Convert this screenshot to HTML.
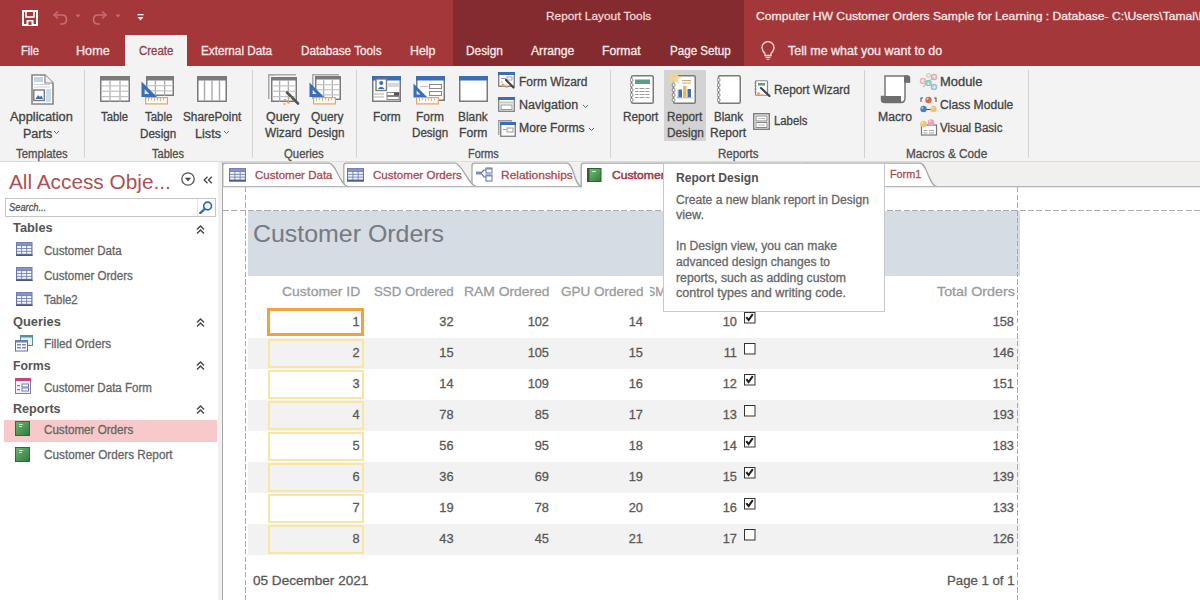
<!DOCTYPE html>
<html><head><meta charset="utf-8"><style>
html,body{margin:0;padding:0;width:1200px;height:600px;overflow:hidden;background:#fff}
body{position:relative;font-family:"Liberation Sans",sans-serif}
.t{position:absolute;white-space:nowrap;transform-origin:0 0;-webkit-text-stroke:0.3px currentColor}
.r{position:absolute}
</style></head><body>
<div class="r" style="left:0px;top:0px;width:1200px;height:66px;background:#A4373A"></div>
<div class="r" style="left:453px;top:0px;width:291px;height:66px;background:#832B2E"></div>
<div class="r" style="left:125px;top:35px;width:62px;height:31px;background:#F3F3F3"></div>
<div class="r" style="left:0px;top:66px;width:1200px;height:96px;background:#F3F3F3"></div>
<div class="r" style="left:0px;top:161px;width:1200px;height:1px;background:#DCDCDC"></div>
<div class="r" style="left:664px;top:70px;width:42px;height:71px;background:#D3D3D3"></div>
<div class="r" style="left:0px;top:162px;width:218px;height:438px;background:#FFFFFF"></div>
<div class="r" style="left:218px;top:162px;width:4px;height:438px;background:#F0F0F0"></div>
<div class="r" style="left:222px;top:162px;width:1px;height:438px;background:#A8A8A8"></div>
<div class="r" style="left:223px;top:162px;width:977px;height:25px;background:#F1F0EF"></div>
<div class="r" style="left:223px;top:186px;width:977px;height:1px;background:#B9BBBE"></div>
<div class="r" style="left:223px;top:187px;width:977px;height:413px;background:#FFFFFF"></div>
<div class="t" style="left:546.40px;top:11.37px;font-size:11.5px;line-height:11.5px;color:#F2D4D4;font-weight:normal;font-style:normal;transform:scaleX(1.0307);">Report Layout Tools</div>
<div class="t" style="left:755.60px;top:11.37px;font-size:11.5px;line-height:11.5px;color:#F8E6E6;font-weight:normal;font-style:normal;transform:scaleX(1.0569);">Computer HW Customer Orders Sample for Learning : Database- C:\Users\Tamal\Documents\Access</div>
<div class="t" style="left:21.30px;top:44.84px;font-size:12px;line-height:12px;color:#FBE9E9;font-weight:normal;font-style:normal;transform:scaleX(0.9310);">File</div>
<div class="t" style="left:76.30px;top:44.84px;font-size:12px;line-height:12px;color:#FBE9E9;font-weight:normal;font-style:normal;transform:scaleX(1.0529);">Home</div>
<div class="t" style="left:201.30px;top:44.84px;font-size:12px;line-height:12px;color:#FBE9E9;font-weight:normal;font-style:normal;transform:scaleX(0.9766);">External Data</div>
<div class="t" style="left:300.50px;top:44.84px;font-size:12px;line-height:12px;color:#FBE9E9;font-weight:normal;font-style:normal;transform:scaleX(0.9758);">Database Tools</div>
<div class="t" style="left:409.50px;top:44.84px;font-size:12px;line-height:12px;color:#FBE9E9;font-weight:normal;font-style:normal;transform:scaleX(1.0292);">Help</div>
<div class="t" style="left:465.50px;top:44.84px;font-size:12px;line-height:12px;color:#FBE9E9;font-weight:normal;font-style:normal;transform:scaleX(0.9879);">Design</div>
<div class="t" style="left:530.70px;top:44.84px;font-size:12px;line-height:12px;color:#FBE9E9;font-weight:normal;font-style:normal;transform:scaleX(1.0143);">Arrange</div>
<div class="t" style="left:602.30px;top:44.84px;font-size:12px;line-height:12px;color:#FBE9E9;font-weight:normal;font-style:normal;transform:scaleX(1.0158);">Format</div>
<div class="t" style="left:669.60px;top:44.84px;font-size:12px;line-height:12px;color:#FBE9E9;font-weight:normal;font-style:normal;transform:scaleX(0.9679);">Page Setup</div>
<div class="t" style="left:788.30px;top:44.84px;font-size:12px;line-height:12px;color:#FBE9E9;font-weight:normal;font-style:normal;transform:scaleX(1.0414);">Tell me what you want to do</div>
<div class="t" style="left:138.50px;top:44.84px;font-size:12px;line-height:12px;color:#93404A;font-weight:normal;font-style:normal;transform:scaleX(0.9524);">Create</div>
<div class="t" style="left:10.40px;top:110.84px;font-size:12px;line-height:12px;color:#444444;font-weight:normal;font-style:normal;transform:scaleX(1.0698);">Application</div>
<div class="t" style="left:22.70px;top:127.84px;font-size:12px;line-height:12px;color:#444444;font-weight:normal;font-style:normal;transform:scaleX(1.0462);">Parts</div>
<div class="t" style="left:101.40px;top:110.84px;font-size:12px;line-height:12px;color:#444444;font-weight:normal;font-style:normal;transform:scaleX(0.9378);">Table</div>
<div class="t" style="left:144.70px;top:110.84px;font-size:12px;line-height:12px;color:#444444;font-weight:normal;font-style:normal;transform:scaleX(0.9517);">Table</div>
<div class="t" style="left:140.40px;top:127.84px;font-size:12px;line-height:12px;color:#444444;font-weight:normal;font-style:normal;transform:scaleX(0.9692);">Design</div>
<div class="t" style="left:182.70px;top:110.84px;font-size:12px;line-height:12px;color:#444444;font-weight:normal;font-style:normal;transform:scaleX(0.9820);">SharePoint</div>
<div class="t" style="left:195.00px;top:127.84px;font-size:12px;line-height:12px;color:#444444;font-weight:normal;font-style:normal;transform:scaleX(1.0538);">Lists</div>
<div class="t" style="left:266.00px;top:111.34px;font-size:12px;line-height:12px;color:#444444;font-weight:normal;font-style:normal;transform:scaleX(1.0344);">Query</div>
<div class="t" style="left:264.70px;top:127.34px;font-size:12px;line-height:12px;color:#444444;font-weight:normal;font-style:normal;transform:scaleX(0.9857);">Wizard</div>
<div class="t" style="left:310.50px;top:111.34px;font-size:12px;line-height:12px;color:#444444;font-weight:normal;font-style:normal;transform:scaleX(0.9946);">Query</div>
<div class="t" style="left:308.30px;top:127.34px;font-size:12px;line-height:12px;color:#444444;font-weight:normal;font-style:normal;transform:scaleX(0.9745);">Design</div>
<div class="t" style="left:372.60px;top:110.84px;font-size:12px;line-height:12px;color:#444444;font-weight:normal;font-style:normal;transform:scaleX(0.9895);">Form</div>
<div class="t" style="left:416.00px;top:110.84px;font-size:12px;line-height:12px;color:#444444;font-weight:normal;font-style:normal;transform:scaleX(0.9967);">Form</div>
<div class="t" style="left:411.90px;top:127.34px;font-size:12px;line-height:12px;color:#444444;font-weight:normal;font-style:normal;transform:scaleX(0.9665);">Design</div>
<div class="t" style="left:458.30px;top:110.84px;font-size:12px;line-height:12px;color:#444444;font-weight:normal;font-style:normal;transform:scaleX(0.9894);">Blank</div>
<div class="t" style="left:459.30px;top:127.34px;font-size:12px;line-height:12px;color:#444444;font-weight:normal;font-style:normal;transform:scaleX(1.0109);">Form</div>
<div class="t" style="left:518.80px;top:75.84px;font-size:12px;line-height:12px;color:#444444;font-weight:normal;font-style:normal;transform:scaleX(0.9976);">Form Wizard</div>
<div class="t" style="left:518.80px;top:99.04px;font-size:12px;line-height:12px;color:#444444;font-weight:normal;font-style:normal;transform:scaleX(1.0441);">Navigation</div>
<div class="t" style="left:518.80px;top:122.24px;font-size:12px;line-height:12px;color:#444444;font-weight:normal;font-style:normal;transform:scaleX(1.0145);">More Forms</div>
<div class="t" style="left:623.40px;top:110.84px;font-size:12px;line-height:12px;color:#444444;font-weight:normal;font-style:normal;transform:scaleX(0.9829);">Report</div>
<div class="t" style="left:666.80px;top:110.84px;font-size:12px;line-height:12px;color:#444444;font-weight:normal;font-style:normal;transform:scaleX(0.9774);">Report</div>
<div class="t" style="left:666.80px;top:127.34px;font-size:12px;line-height:12px;color:#444444;font-weight:normal;font-style:normal;transform:scaleX(0.9852);">Design</div>
<div class="t" style="left:713.60px;top:110.84px;font-size:12px;line-height:12px;color:#444444;font-weight:normal;font-style:normal;transform:scaleX(0.9661);">Blank</div>
<div class="t" style="left:710.00px;top:127.34px;font-size:12px;line-height:12px;color:#444444;font-weight:normal;font-style:normal;transform:scaleX(0.9996);">Report</div>
<div class="t" style="left:773.60px;top:84.04px;font-size:12px;line-height:12px;color:#444444;font-weight:normal;font-style:normal;transform:scaleX(0.9885);">Report Wizard</div>
<div class="t" style="left:773.60px;top:115.44px;font-size:12px;line-height:12px;color:#444444;font-weight:normal;font-style:normal;transform:scaleX(0.9446);">Labels</div>
<div class="t" style="left:878.00px;top:110.84px;font-size:12px;line-height:12px;color:#444444;font-weight:normal;font-style:normal;transform:scaleX(1.0199);">Macro</div>
<div class="t" style="left:940.00px;top:75.84px;font-size:12px;line-height:12px;color:#444444;font-weight:normal;font-style:normal;transform:scaleX(1.0774);">Module</div>
<div class="t" style="left:940.00px;top:99.04px;font-size:12px;line-height:12px;color:#444444;font-weight:normal;font-style:normal;transform:scaleX(1.0083);">Class Module</div>
<div class="t" style="left:940.00px;top:122.24px;font-size:12px;line-height:12px;color:#444444;font-weight:normal;font-style:normal;transform:scaleX(0.9579);">Visual Basic</div>
<div class="t" style="left:16.00px;top:147.84px;font-size:12px;line-height:12px;color:#505050;font-weight:normal;font-style:normal;transform:scaleX(0.9435);">Templates</div>
<div class="t" style="left:151.70px;top:147.84px;font-size:12px;line-height:12px;color:#505050;font-weight:normal;font-style:normal;transform:scaleX(0.9226);">Tables</div>
<div class="t" style="left:284.40px;top:147.84px;font-size:12px;line-height:12px;color:#505050;font-weight:normal;font-style:normal;transform:scaleX(0.9473);">Queries</div>
<div class="t" style="left:468.00px;top:147.84px;font-size:12px;line-height:12px;color:#505050;font-weight:normal;font-style:normal;transform:scaleX(0.9060);">Forms</div>
<div class="t" style="left:718.00px;top:147.84px;font-size:12px;line-height:12px;color:#505050;font-weight:normal;font-style:normal;transform:scaleX(0.9616);">Reports</div>
<div class="t" style="left:906.00px;top:147.84px;font-size:12px;line-height:12px;color:#505050;font-weight:normal;font-style:normal;transform:scaleX(0.9819);">Macros &amp; Code</div>
<div class="r" style="left:84px;top:70px;width:1px;height:88px;background:#D2D2D2"></div>
<div class="r" style="left:252px;top:70px;width:1px;height:88px;background:#D2D2D2"></div>
<div class="r" style="left:356px;top:70px;width:1px;height:88px;background:#D2D2D2"></div>
<div class="r" style="left:610px;top:70px;width:1px;height:88px;background:#D2D2D2"></div>
<div class="r" style="left:864px;top:70px;width:1px;height:88px;background:#D2D2D2"></div>
<div class="r" style="left:1028px;top:70px;width:1px;height:88px;background:#D2D2D2"></div>
<div class="t" style="left:9.00px;top:170.82px;font-size:21px;line-height:21px;color:#AD5057;font-weight:normal;font-style:normal;transform:scaleX(0.9902);-webkit-text-stroke:0">All Access Obje...</div>
<div class="r" style="left:5px;top:198px;width:211px;height:19px;background:#fff;border:1px solid #C6C6C6;box-sizing:border-box"></div>
<div class="r" style="left:197px;top:199px;width:1px;height:17px;background:#E2E2E2"></div>
<div class="t" style="left:8.70px;top:201.69px;font-size:11px;line-height:11px;color:#555;font-weight:normal;font-style:italic;transform:scaleX(0.8474);">Search...</div>
<div class="t" style="left:13.40px;top:222.22px;font-size:12.5px;line-height:12.5px;color:#555555;font-weight:bold;font-style:normal;transform:scaleX(1.0267);-webkit-text-stroke:0;">Tables</div>
<div class="t" style="left:13.40px;top:316.02px;font-size:12.5px;line-height:12.5px;color:#555555;font-weight:bold;font-style:normal;transform:scaleX(1.0290);-webkit-text-stroke:0;">Queries</div>
<div class="t" style="left:13.40px;top:359.82px;font-size:12.5px;line-height:12.5px;color:#555555;font-weight:bold;font-style:normal;transform:scaleX(0.9843);-webkit-text-stroke:0;">Forms</div>
<div class="t" style="left:13.40px;top:403.12px;font-size:12.5px;line-height:12.5px;color:#555555;font-weight:bold;font-style:normal;transform:scaleX(1.0079);-webkit-text-stroke:0;">Reports</div>
<div class="r" style="left:4px;top:420px;width:213px;height:22px;background:#F8C9CA"></div>
<div class="t" style="left:44.40px;top:244.84px;font-size:12px;line-height:12px;color:#666666;font-weight:normal;font-style:normal;transform:scaleX(0.9617);">Customer Data</div>
<div class="t" style="left:44.40px;top:269.84px;font-size:12px;line-height:12px;color:#666666;font-weight:normal;font-style:normal;transform:scaleX(0.9661);">Customer Orders</div>
<div class="t" style="left:44.40px;top:294.34px;font-size:12px;line-height:12px;color:#666666;font-weight:normal;font-style:normal;transform:scaleX(0.9503);">Table2</div>
<div class="t" style="left:44.40px;top:338.34px;font-size:12px;line-height:12px;color:#666666;font-weight:normal;font-style:normal;transform:scaleX(0.9785);">Filled Orders</div>
<div class="t" style="left:44.40px;top:381.84px;font-size:12px;line-height:12px;color:#666666;font-weight:normal;font-style:normal;transform:scaleX(0.9641);">Customer Data Form</div>
<div class="t" style="left:44.40px;top:424.44px;font-size:12px;line-height:12px;color:#666666;font-weight:normal;font-style:normal;transform:scaleX(0.9694);">Customer Orders</div>
<div class="t" style="left:44.40px;top:449.44px;font-size:12px;line-height:12px;color:#666666;font-weight:normal;font-style:normal;transform:scaleX(0.9790);">Customer Orders Report</div>
<div class="r" style="left:247.5px;top:211px;width:772.5px;height:65px;background:#D6DCE4"></div>
<div class="t" style="left:252.60px;top:221.98px;font-size:24px;line-height:24px;color:#777A82;font-weight:normal;font-style:normal;transform:scaleX(1.0379);-webkit-text-stroke:0.05px">Customer Orders</div>
<div class="t" style="left:281.80px;top:284.54px;font-size:13.3px;line-height:13.3px;color:#9B9B9B;font-weight:normal;font-style:normal;transform:scaleX(1.0477);">Customer ID</div>
<div class="t" style="left:374.30px;top:284.54px;font-size:13.3px;line-height:13.3px;color:#9B9B9B;font-weight:normal;font-style:normal;transform:scaleX(0.9984);">SSD Ordered</div>
<div class="t" style="left:464.00px;top:284.54px;font-size:13.3px;line-height:13.3px;color:#9B9B9B;font-weight:normal;font-style:normal;transform:scaleX(1.0434);">RAM Ordered</div>
<div class="t" style="left:561.00px;top:284.54px;font-size:13.3px;line-height:13.3px;color:#9B9B9B;font-weight:normal;font-style:normal;transform:scaleX(1.0160);">GPU Ordered</div>
<div class="t" style="left:937.10px;top:284.54px;font-size:13.3px;line-height:13.3px;color:#9B9B9B;font-weight:normal;font-style:normal;transform:scaleX(1.0755);">Total Orders</div>
<div class="r" style="left:267px;top:308px;width:97px;height:28px;border:3px solid #F2A13C;box-sizing:border-box"></div>
<div class="t" style="left:352.38px;top:315.56px;font-size:12.8px;line-height:12.8px;color:#595959;font-weight:normal;font-style:normal;transform:scaleX(1.0000);">1</div>
<div class="t" style="left:439.36px;top:315.56px;font-size:12.8px;line-height:12.8px;color:#595959;font-weight:normal;font-style:normal;transform:scaleX(1.0000);">32</div>
<div class="t" style="left:527.65px;top:315.56px;font-size:12.8px;line-height:12.8px;color:#595959;font-weight:normal;font-style:normal;transform:scaleX(1.0000);">102</div>
<div class="t" style="left:628.76px;top:315.56px;font-size:12.8px;line-height:12.8px;color:#595959;font-weight:normal;font-style:normal;transform:scaleX(1.0000);">14</div>
<div class="t" style="left:722.76px;top:315.56px;font-size:12.8px;line-height:12.8px;color:#595959;font-weight:normal;font-style:normal;transform:scaleX(1.0000);">10</div>
<div class="t" style="left:992.65px;top:315.56px;font-size:12.8px;line-height:12.8px;color:#595959;font-weight:normal;font-style:normal;transform:scaleX(1.0000);">158</div>
<svg class="r" style="left:743.5px;top:311.5px" width="12" height="12" viewBox="0 0 12 12"><rect x="0.5" y="0.5" width="10.5" height="10.5" fill="#fff" stroke="#333" stroke-width="1"/><path d="M2.3 5.2 L4.6 8 L8.8 2.2" fill="none" stroke="#1E1E1E" stroke-width="2"/></svg>
<div class="r" style="left:248px;top:338px;width:772px;height:31px;background:#F2F2F2"></div>
<div class="r" style="left:267.5px;top:339px;width:96px;height:28.5px;border:2.5px solid #F9E5A4;box-sizing:border-box"></div>
<div class="t" style="left:352.38px;top:346.56px;font-size:12.8px;line-height:12.8px;color:#595959;font-weight:normal;font-style:normal;transform:scaleX(1.0000);">2</div>
<div class="t" style="left:439.36px;top:346.56px;font-size:12.8px;line-height:12.8px;color:#595959;font-weight:normal;font-style:normal;transform:scaleX(1.0000);">15</div>
<div class="t" style="left:527.65px;top:346.56px;font-size:12.8px;line-height:12.8px;color:#595959;font-weight:normal;font-style:normal;transform:scaleX(1.0000);">105</div>
<div class="t" style="left:628.76px;top:346.56px;font-size:12.8px;line-height:12.8px;color:#595959;font-weight:normal;font-style:normal;transform:scaleX(1.0000);">15</div>
<div class="t" style="left:723.71px;top:346.56px;font-size:12.8px;line-height:12.8px;color:#595959;font-weight:normal;font-style:normal;transform:scaleX(1.0000);">11</div>
<div class="t" style="left:992.65px;top:346.56px;font-size:12.8px;line-height:12.8px;color:#595959;font-weight:normal;font-style:normal;transform:scaleX(1.0000);">146</div>
<svg class="r" style="left:743.5px;top:342.5px" width="12" height="12" viewBox="0 0 12 12"><rect x="0.5" y="0.5" width="10.5" height="10.5" fill="#fff" stroke="#333" stroke-width="1"/></svg>
<div class="r" style="left:267.5px;top:370px;width:96px;height:28.5px;border:2.5px solid #F9E5A4;box-sizing:border-box"></div>
<div class="t" style="left:352.38px;top:377.56px;font-size:12.8px;line-height:12.8px;color:#595959;font-weight:normal;font-style:normal;transform:scaleX(1.0000);">3</div>
<div class="t" style="left:439.36px;top:377.56px;font-size:12.8px;line-height:12.8px;color:#595959;font-weight:normal;font-style:normal;transform:scaleX(1.0000);">14</div>
<div class="t" style="left:527.65px;top:377.56px;font-size:12.8px;line-height:12.8px;color:#595959;font-weight:normal;font-style:normal;transform:scaleX(1.0000);">109</div>
<div class="t" style="left:628.76px;top:377.56px;font-size:12.8px;line-height:12.8px;color:#595959;font-weight:normal;font-style:normal;transform:scaleX(1.0000);">16</div>
<div class="t" style="left:722.76px;top:377.56px;font-size:12.8px;line-height:12.8px;color:#595959;font-weight:normal;font-style:normal;transform:scaleX(1.0000);">12</div>
<div class="t" style="left:992.65px;top:377.56px;font-size:12.8px;line-height:12.8px;color:#595959;font-weight:normal;font-style:normal;transform:scaleX(1.0000);">151</div>
<svg class="r" style="left:743.5px;top:373.5px" width="12" height="12" viewBox="0 0 12 12"><rect x="0.5" y="0.5" width="10.5" height="10.5" fill="#fff" stroke="#333" stroke-width="1"/><path d="M2.3 5.2 L4.6 8 L8.8 2.2" fill="none" stroke="#1E1E1E" stroke-width="2"/></svg>
<div class="r" style="left:248px;top:400px;width:772px;height:31px;background:#F2F2F2"></div>
<div class="r" style="left:267.5px;top:401px;width:96px;height:28.5px;border:2.5px solid #F9E5A4;box-sizing:border-box"></div>
<div class="t" style="left:352.38px;top:408.56px;font-size:12.8px;line-height:12.8px;color:#595959;font-weight:normal;font-style:normal;transform:scaleX(1.0000);">4</div>
<div class="t" style="left:439.36px;top:408.56px;font-size:12.8px;line-height:12.8px;color:#595959;font-weight:normal;font-style:normal;transform:scaleX(1.0000);">78</div>
<div class="t" style="left:534.76px;top:408.56px;font-size:12.8px;line-height:12.8px;color:#595959;font-weight:normal;font-style:normal;transform:scaleX(1.0000);">85</div>
<div class="t" style="left:628.76px;top:408.56px;font-size:12.8px;line-height:12.8px;color:#595959;font-weight:normal;font-style:normal;transform:scaleX(1.0000);">17</div>
<div class="t" style="left:722.76px;top:408.56px;font-size:12.8px;line-height:12.8px;color:#595959;font-weight:normal;font-style:normal;transform:scaleX(1.0000);">13</div>
<div class="t" style="left:992.65px;top:408.56px;font-size:12.8px;line-height:12.8px;color:#595959;font-weight:normal;font-style:normal;transform:scaleX(1.0000);">193</div>
<svg class="r" style="left:743.5px;top:404.5px" width="12" height="12" viewBox="0 0 12 12"><rect x="0.5" y="0.5" width="10.5" height="10.5" fill="#fff" stroke="#333" stroke-width="1"/></svg>
<div class="r" style="left:267.5px;top:432px;width:96px;height:28.5px;border:2.5px solid #F9E5A4;box-sizing:border-box"></div>
<div class="t" style="left:352.38px;top:439.56px;font-size:12.8px;line-height:12.8px;color:#595959;font-weight:normal;font-style:normal;transform:scaleX(1.0000);">5</div>
<div class="t" style="left:439.36px;top:439.56px;font-size:12.8px;line-height:12.8px;color:#595959;font-weight:normal;font-style:normal;transform:scaleX(1.0000);">56</div>
<div class="t" style="left:534.76px;top:439.56px;font-size:12.8px;line-height:12.8px;color:#595959;font-weight:normal;font-style:normal;transform:scaleX(1.0000);">95</div>
<div class="t" style="left:628.76px;top:439.56px;font-size:12.8px;line-height:12.8px;color:#595959;font-weight:normal;font-style:normal;transform:scaleX(1.0000);">18</div>
<div class="t" style="left:722.76px;top:439.56px;font-size:12.8px;line-height:12.8px;color:#595959;font-weight:normal;font-style:normal;transform:scaleX(1.0000);">14</div>
<div class="t" style="left:992.65px;top:439.56px;font-size:12.8px;line-height:12.8px;color:#595959;font-weight:normal;font-style:normal;transform:scaleX(1.0000);">183</div>
<svg class="r" style="left:743.5px;top:435.5px" width="12" height="12" viewBox="0 0 12 12"><rect x="0.5" y="0.5" width="10.5" height="10.5" fill="#fff" stroke="#333" stroke-width="1"/><path d="M2.3 5.2 L4.6 8 L8.8 2.2" fill="none" stroke="#1E1E1E" stroke-width="2"/></svg>
<div class="r" style="left:248px;top:462px;width:772px;height:31px;background:#F2F2F2"></div>
<div class="r" style="left:267.5px;top:463px;width:96px;height:28.5px;border:2.5px solid #F9E5A4;box-sizing:border-box"></div>
<div class="t" style="left:352.38px;top:470.56px;font-size:12.8px;line-height:12.8px;color:#595959;font-weight:normal;font-style:normal;transform:scaleX(1.0000);">6</div>
<div class="t" style="left:439.36px;top:470.56px;font-size:12.8px;line-height:12.8px;color:#595959;font-weight:normal;font-style:normal;transform:scaleX(1.0000);">36</div>
<div class="t" style="left:534.76px;top:470.56px;font-size:12.8px;line-height:12.8px;color:#595959;font-weight:normal;font-style:normal;transform:scaleX(1.0000);">69</div>
<div class="t" style="left:628.76px;top:470.56px;font-size:12.8px;line-height:12.8px;color:#595959;font-weight:normal;font-style:normal;transform:scaleX(1.0000);">19</div>
<div class="t" style="left:722.76px;top:470.56px;font-size:12.8px;line-height:12.8px;color:#595959;font-weight:normal;font-style:normal;transform:scaleX(1.0000);">15</div>
<div class="t" style="left:992.65px;top:470.56px;font-size:12.8px;line-height:12.8px;color:#595959;font-weight:normal;font-style:normal;transform:scaleX(1.0000);">139</div>
<svg class="r" style="left:743.5px;top:466.5px" width="12" height="12" viewBox="0 0 12 12"><rect x="0.5" y="0.5" width="10.5" height="10.5" fill="#fff" stroke="#333" stroke-width="1"/><path d="M2.3 5.2 L4.6 8 L8.8 2.2" fill="none" stroke="#1E1E1E" stroke-width="2"/></svg>
<div class="r" style="left:267.5px;top:494px;width:96px;height:28.5px;border:2.5px solid #F9E5A4;box-sizing:border-box"></div>
<div class="t" style="left:352.38px;top:501.56px;font-size:12.8px;line-height:12.8px;color:#595959;font-weight:normal;font-style:normal;transform:scaleX(1.0000);">7</div>
<div class="t" style="left:439.36px;top:501.56px;font-size:12.8px;line-height:12.8px;color:#595959;font-weight:normal;font-style:normal;transform:scaleX(1.0000);">19</div>
<div class="t" style="left:534.76px;top:501.56px;font-size:12.8px;line-height:12.8px;color:#595959;font-weight:normal;font-style:normal;transform:scaleX(1.0000);">78</div>
<div class="t" style="left:628.76px;top:501.56px;font-size:12.8px;line-height:12.8px;color:#595959;font-weight:normal;font-style:normal;transform:scaleX(1.0000);">20</div>
<div class="t" style="left:722.76px;top:501.56px;font-size:12.8px;line-height:12.8px;color:#595959;font-weight:normal;font-style:normal;transform:scaleX(1.0000);">16</div>
<div class="t" style="left:992.65px;top:501.56px;font-size:12.8px;line-height:12.8px;color:#595959;font-weight:normal;font-style:normal;transform:scaleX(1.0000);">133</div>
<svg class="r" style="left:743.5px;top:497.5px" width="12" height="12" viewBox="0 0 12 12"><rect x="0.5" y="0.5" width="10.5" height="10.5" fill="#fff" stroke="#333" stroke-width="1"/><path d="M2.3 5.2 L4.6 8 L8.8 2.2" fill="none" stroke="#1E1E1E" stroke-width="2"/></svg>
<div class="r" style="left:248px;top:524px;width:772px;height:31px;background:#F2F2F2"></div>
<div class="r" style="left:267.5px;top:525px;width:96px;height:28.5px;border:2.5px solid #F9E5A4;box-sizing:border-box"></div>
<div class="t" style="left:352.38px;top:532.56px;font-size:12.8px;line-height:12.8px;color:#595959;font-weight:normal;font-style:normal;transform:scaleX(1.0000);">8</div>
<div class="t" style="left:439.36px;top:532.56px;font-size:12.8px;line-height:12.8px;color:#595959;font-weight:normal;font-style:normal;transform:scaleX(1.0000);">43</div>
<div class="t" style="left:534.76px;top:532.56px;font-size:12.8px;line-height:12.8px;color:#595959;font-weight:normal;font-style:normal;transform:scaleX(1.0000);">45</div>
<div class="t" style="left:628.76px;top:532.56px;font-size:12.8px;line-height:12.8px;color:#595959;font-weight:normal;font-style:normal;transform:scaleX(1.0000);">21</div>
<div class="t" style="left:722.76px;top:532.56px;font-size:12.8px;line-height:12.8px;color:#595959;font-weight:normal;font-style:normal;transform:scaleX(1.0000);">17</div>
<div class="t" style="left:992.65px;top:532.56px;font-size:12.8px;line-height:12.8px;color:#595959;font-weight:normal;font-style:normal;transform:scaleX(1.0000);">126</div>
<svg class="r" style="left:743.5px;top:528.5px" width="12" height="12" viewBox="0 0 12 12"><rect x="0.5" y="0.5" width="10.5" height="10.5" fill="#fff" stroke="#333" stroke-width="1"/></svg>
<div class="t" style="left:252.70px;top:575.46px;font-size:12.8px;line-height:12.8px;color:#595959;font-weight:normal;font-style:normal;transform:scaleX(1.0592);">05 December 2021</div>
<div class="t" style="left:946.50px;top:575.36px;font-size:12.8px;line-height:12.8px;color:#595959;font-weight:normal;font-style:normal;transform:scaleX(1.0310);">Page 1 of 1</div>
<div class="r" style="left:650px;top:280px;width:13px;height:20px;overflow:hidden"><div class="t" style="left:-3px;top:4.54px;font-size:13.3px;line-height:13.3px;color:#9B9B9B;transform:scaleX(0.93)">SM</div></div>
<div class="r" style="left:223px;top:210px;width:977px;height:1px;background:repeating-linear-gradient(90deg,#ABABAB 0 6px,transparent 6px 8.3px)"></div>
<div class="r" style="left:245px;top:187px;width:1px;height:413px;background:repeating-linear-gradient(180deg,#ABABAB 0 5.5px,transparent 5.5px 7.7px)"></div>
<div class="r" style="left:1017px;top:187px;width:1px;height:413px;background:repeating-linear-gradient(180deg,#ABABAB 0 5.5px,transparent 5.5px 7.7px)"></div>
<svg class="r" style="left:31px;top:74px" width="23" height="31" viewBox="0 0 23 31"><path d="M1 1 H14 L22 9 V30 H1 Z" fill="#fff" stroke="#858585" stroke-width="1.6"/><path d="M14 1 V9 H22" fill="#F4F4F4" stroke="#858585" stroke-width="1.2"/><rect x="3" y="3" width="9" height="5" fill="#BFD3EA"/><rect x="3" y="10" width="16" height="1" fill="#D0D0D0"/><rect x="3" y="12.5" width="16" height="1" fill="#D0D0D0"/><rect x="15" y="15" width="5" height="13" fill="#C9DBEE"/><rect x="2.8" y="16" width="10.5" height="10.5" fill="#fff" stroke="#7A7A7A" stroke-width="1.4"/><path d="M4.5 25 L7 21 L9 23 L10.5 21.5 L12 25 Z" fill="#3C6EB4"/></svg>
<svg class="r" style="left:100px;top:76px" width="30" height="26" viewBox="0 0 30 26"><rect x="0.75" y="0.75" width="28.5" height="24.5" fill="#fff" stroke="#7A7A7A" stroke-width="1.5"/><rect x="0" y="0" width="30" height="4.5" fill="#7A7A7A"/><rect x="9.40" y="4.5" width="1.2" height="21.5" fill="#A9A9A9"/><rect x="19.40" y="4.5" width="1.2" height="21.5" fill="#A9A9A9"/><rect x="1" y="9.28" width="28" height="1.2" fill="#C4C4C4"/><rect x="1" y="14.65" width="28" height="1.2" fill="#C4C4C4"/><rect x="1" y="20.02" width="28" height="1.2" fill="#C4C4C4"/></svg>
<svg class="r" style="left:146px;top:76px" width="28" height="20" viewBox="0 0 28 20"><rect x="0.75" y="0.75" width="26.5" height="18.5" fill="#fff" stroke="#7A7A7A" stroke-width="1.5"/><rect x="0" y="0" width="28" height="4.5" fill="#7A7A7A"/><rect x="8.73" y="4.5" width="1.2" height="15.5" fill="#A9A9A9"/><rect x="18.07" y="4.5" width="1.2" height="15.5" fill="#A9A9A9"/><rect x="1" y="9.07" width="26" height="1.2" fill="#C4C4C4"/><rect x="1" y="14.23" width="26" height="1.2" fill="#C4C4C4"/></svg>
<svg class="r" style="left:141px;top:81px" width="17" height="17" viewBox="0 0 17 17"><path d="M0.5 0.5 V16 H16 Z" fill="#3A6FB7"/><path d="M3.6 8.2 V12.9 H8.3 Z" fill="#DDEBF7"/></svg>
<svg class="r" style="left:145px;top:97px" width="23" height="8" viewBox="0 0 23 8"><rect x="0.6" y="0.6" width="21.8" height="6.3" fill="#FFFDF8" stroke="#E9A265" stroke-width="1.2"/><rect x="3" y="1.2" width="0.9" height="3" fill="#E9A265"/><rect x="6" y="1.2" width="0.9" height="2" fill="#E9A265"/><rect x="9" y="1.2" width="0.9" height="3" fill="#E9A265"/><rect x="12" y="1.2" width="0.9" height="2" fill="#E9A265"/><rect x="15" y="1.2" width="0.9" height="3" fill="#E9A265"/><rect x="18" y="1.2" width="0.9" height="2" fill="#E9A265"/></svg>
<svg class="r" style="left:197px;top:76px" width="30" height="26" viewBox="0 0 30 26"><rect x="0.75" y="0.75" width="28.5" height="24.5" fill="#fff" stroke="#7A7A7A" stroke-width="1.5"/><rect x="0" y="0" width="30" height="4.5" fill="#7A7A7A"/><rect x="6.8" y="4" width="1.4" height="21" fill="#A9A9A9"/><rect x="14.3" y="4" width="1.4" height="21" fill="#A9A9A9"/><rect x="21.8" y="4" width="1.4" height="21" fill="#A9A9A9"/></svg>
<svg class="r" style="left:268px;top:74px" width="7" height="26" viewBox="0 0 7 26"><path d="M0.75 25 V0.75 H28" fill="none" stroke="#A9A9A9" stroke-width="1.5"/></svg>
<svg class="r" style="left:268px;top:74px" width="30" height="4" viewBox="0 0 30 4"><path d="M0.75 0.75 H28" fill="none" stroke="#A9A9A9" stroke-width="1.5"/></svg>
<svg class="r" style="left:271px;top:77px" width="26" height="25" viewBox="0 0 26 25"><rect x="0.75" y="0.75" width="24.5" height="23.5" fill="#fff" stroke="#7A7A7A" stroke-width="1.5"/><rect x="0" y="0" width="26" height="3.5" fill="#7A7A7A"/><rect x="8.07" y="3.5" width="1.2" height="21.5" fill="#A9A9A9"/><rect x="16.73" y="3.5" width="1.2" height="21.5" fill="#A9A9A9"/><rect x="1" y="8.28" width="24" height="1.2" fill="#C4C4C4"/><rect x="1" y="13.65" width="24" height="1.2" fill="#C4C4C4"/><rect x="1" y="19.02" width="24" height="1.2" fill="#C4C4C4"/></svg>
<svg class="r" style="left:282px;top:90px" width="18" height="16" viewBox="0 0 18 16"><path d="M5 2.5 L16 13.5" stroke="#555" stroke-width="2.6" stroke-linecap="round"/><circle cx="3" cy="10" r="1.3" fill="#E9A265"/><circle cx="6.5" cy="12.5" r="1.3" fill="#E9A265"/><circle cx="2.5" cy="14" r="1" fill="#E9A265"/><circle cx="8" cy="8" r="1" fill="#F5C89A"/></svg>
<svg class="r" style="left:312px;top:74px" width="28" height="26" viewBox="0 0 28 26"><path d="M0.75 25 V0.75 H27" fill="none" stroke="#A9A9A9" stroke-width="1.5"/></svg>
<svg class="r" style="left:315px;top:76px" width="26" height="24" viewBox="0 0 26 24"><rect x="0.75" y="0.75" width="24.5" height="22.5" fill="#fff" stroke="#7A7A7A" stroke-width="1.5"/><rect x="0" y="0" width="26" height="3.5" fill="#7A7A7A"/><rect x="8.07" y="3.5" width="1.2" height="20.5" fill="#A9A9A9"/><rect x="16.73" y="3.5" width="1.2" height="20.5" fill="#A9A9A9"/><rect x="1" y="8.03" width="24" height="1.2" fill="#C4C4C4"/><rect x="1" y="13.15" width="24" height="1.2" fill="#C4C4C4"/><rect x="1" y="18.27" width="24" height="1.2" fill="#C4C4C4"/></svg>
<svg class="r" style="left:309px;top:82px" width="17" height="16" viewBox="0 0 17 16"><path d="M0.5 0.5 V15 H15 Z" fill="#3A6FB7"/><path d="M3.6 7.8 V11.9 H7.7 Z" fill="#DDEBF7"/></svg>
<svg class="r" style="left:313px;top:97px" width="23" height="8" viewBox="0 0 23 8"><rect x="0.6" y="0.6" width="21.8" height="6.3" fill="#FFFDF8" stroke="#E9A265" stroke-width="1.2"/><rect x="3" y="1.2" width="0.9" height="3" fill="#E9A265"/><rect x="6" y="1.2" width="0.9" height="2" fill="#E9A265"/><rect x="9" y="1.2" width="0.9" height="3" fill="#E9A265"/><rect x="12" y="1.2" width="0.9" height="2" fill="#E9A265"/><rect x="15" y="1.2" width="0.9" height="3" fill="#E9A265"/><rect x="18" y="1.2" width="0.9" height="2" fill="#E9A265"/></svg>
<svg class="r" style="left:372px;top:76px" width="29" height="26" viewBox="0 0 29 26"><rect x="0.75" y="0.75" width="27.5" height="24.5" fill="#fff" stroke="#7A7A7A" stroke-width="1.5"/><rect x="0" y="0" width="29" height="4.5" fill="#3A6FB7"/><rect x="4" y="3" width="10.5" height="11.5" fill="#fff" stroke="#7A7A7A" stroke-width="1.4"/><circle cx="9.2" cy="7" r="2" fill="#3A6FB7"/><path d="M5.8 13 Q9.2 8.5 12.6 13 Z" fill="#3A6FB7"/><rect x="16" y="7" width="11" height="4" fill="#D8D8D8"/><rect x="2" y="17.5" width="10" height="1" fill="#B0B0B0"/><rect x="2" y="20.5" width="10" height="1" fill="#B0B0B0"/><rect x="15" y="16.5" width="12" height="3" fill="#fff" stroke="#888" stroke-width="1"/><rect x="22" y="16.5" width="5" height="3" fill="#555"/><rect x="15" y="20.5" width="12" height="3" fill="#fff" stroke="#888" stroke-width="1"/></svg>
<svg class="r" style="left:416px;top:76px" width="29" height="25" viewBox="0 0 29 25"><rect x="0.75" y="0.75" width="27.5" height="23.5" fill="#fff" stroke="#7A7A7A" stroke-width="1.5"/><rect x="0" y="0" width="29" height="4.5" fill="#3A6FB7"/><rect x="13.5" y="8.5" width="12" height="4" fill="#fff" stroke="#8A8A8A" stroke-width="1.1"/><rect x="13.5" y="15.5" width="12" height="4" fill="#fff" stroke="#8A8A8A" stroke-width="1.1"/><rect x="4" y="10" width="8" height="0.9" fill="#BBB"/></svg>
<svg class="r" style="left:413px;top:83px" width="16" height="15" viewBox="0 0 16 15"><path d="M0.5 0.5 V14.5 H14.5 Z" fill="#3A6FB7"/><path d="M3.6 7.6 V11.4 H7.4 Z" fill="#DDEBF7"/></svg>
<svg class="r" style="left:416px;top:97px" width="23" height="8" viewBox="0 0 23 8"><rect x="0.6" y="0.6" width="21.8" height="6.3" fill="#FFFDF8" stroke="#E9A265" stroke-width="1.2"/><rect x="3" y="1.2" width="0.9" height="3" fill="#E9A265"/><rect x="6" y="1.2" width="0.9" height="2" fill="#E9A265"/><rect x="9" y="1.2" width="0.9" height="3" fill="#E9A265"/><rect x="12" y="1.2" width="0.9" height="2" fill="#E9A265"/><rect x="15" y="1.2" width="0.9" height="3" fill="#E9A265"/><rect x="18" y="1.2" width="0.9" height="2" fill="#E9A265"/></svg>
<svg class="r" style="left:459px;top:76px" width="29" height="26" viewBox="0 0 29 26"><rect x="0.75" y="0.75" width="27.5" height="24.5" fill="#fff" stroke="#7A7A7A" stroke-width="1.5"/><rect x="0" y="0" width="29" height="4.5" fill="#3A6FB7"/></svg>
<svg class="r" style="left:498px;top:72px" width="17" height="17" viewBox="0 0 17 17"><rect x="0.75" y="0.75" width="15.5" height="13.5" fill="#fff" stroke="#7A7A7A" stroke-width="1.3"/><rect x="0" y="0" width="17" height="3" fill="#3A6FB7"/><rect x="3" y="6" width="5" height="1" fill="#999"/><rect x="9" y="5" width="5" height="3" fill="none" stroke="#999" stroke-width="0.9"/><path d="M8 8 L15.5 15.5" stroke="#444" stroke-width="2.2" stroke-linecap="round"/><circle cx="5" cy="13" r="1.5" fill="#E9A265"/><circle cx="8.5" cy="15" r="1.2" fill="#E9A265"/><circle cx="4" cy="10" r="1" fill="#F3C08C"/></svg>
<svg class="r" style="left:498px;top:97px" width="17" height="15" viewBox="0 0 17 15"><rect x="0.75" y="0.75" width="15.5" height="13.5" fill="#fff" stroke="#7A7A7A" stroke-width="1.3"/><rect x="0" y="0" width="17" height="3" fill="#3A6FB7"/><rect x="2" y="4.5" width="13" height="2" fill="#C8C8C8"/><rect x="3" y="8" width="11" height="4.5" fill="#fff" stroke="#999" stroke-width="1"/></svg>
<svg class="r" style="left:498px;top:120px" width="18" height="17" viewBox="0 0 18 17"><path d="M0.75 15 V0.75 H14" fill="none" stroke="#999" stroke-width="1.3"/><rect x="2.75" y="2.75" width="14.5" height="13.5" fill="#fff" stroke="#7A7A7A" stroke-width="1.3"/><rect x="2" y="2" width="16" height="3" fill="#3A6FB7"/><rect x="5" y="9" width="3" height="1" fill="#999"/><rect x="9" y="8" width="6" height="4" fill="#fff" stroke="#999" stroke-width="1"/></svg>
<svg class="r" style="left:53px;top:130px" width="7" height="5" viewBox="0 0 7 5"><path d="M1 1 L3.5 3.5 L6 1" fill="none" stroke="#666" stroke-width="1"/></svg>
<svg class="r" style="left:223px;top:130px" width="7" height="5" viewBox="0 0 7 5"><path d="M1 1 L3.5 3.5 L6 1" fill="none" stroke="#666" stroke-width="1"/></svg>
<svg class="r" style="left:582px;top:104px" width="7" height="5" viewBox="0 0 7 5"><path d="M1 1 L3.5 3.5 L6 1" fill="none" stroke="#666" stroke-width="1"/></svg>
<svg class="r" style="left:588px;top:127px" width="7" height="5" viewBox="0 0 7 5"><path d="M1 1 L3.5 3.5 L6 1" fill="none" stroke="#666" stroke-width="1"/></svg>
<svg class="r" style="left:630px;top:75px" width="24" height="29" viewBox="0 0 24 29"><rect x="1.5" y="0.75" width="21.75" height="27.5" rx="1.5" fill="#fff" stroke="#7A7A7A" stroke-width="1.5"/><circle cx="1.6" cy="5" r="1.5" fill="#fff" stroke="#888" stroke-width="1"/><circle cx="1.6" cy="10" r="1.5" fill="#fff" stroke="#888" stroke-width="1"/><circle cx="1.6" cy="15" r="1.5" fill="#fff" stroke="#888" stroke-width="1"/><circle cx="1.6" cy="20" r="1.5" fill="#fff" stroke="#888" stroke-width="1"/><circle cx="1.6" cy="25" r="1.5" fill="#fff" stroke="#888" stroke-width="1"/><rect x="5" y="4.5" width="15" height="4.5" fill="#5C9E80"/><rect x="5" y="13" width="3.5" height="1" fill="#9A9A9A"/><rect x="9.5" y="13" width="5" height="1" fill="#9A9A9A"/><rect x="15.5" y="13" width="4" height="1" fill="#9A9A9A"/><rect x="5" y="16" width="3.5" height="1" fill="#9A9A9A"/><rect x="9.5" y="16" width="5" height="1" fill="#9A9A9A"/><rect x="15.5" y="16" width="4" height="1" fill="#9A9A9A"/><rect x="5" y="19" width="3.5" height="1" fill="#9A9A9A"/><rect x="9.5" y="19" width="5" height="1" fill="#9A9A9A"/><rect x="15.5" y="19" width="4" height="1" fill="#9A9A9A"/><rect x="5" y="22" width="3.5" height="1" fill="#9A9A9A"/><rect x="9.5" y="22" width="5" height="1" fill="#9A9A9A"/><rect x="15.5" y="22" width="4" height="1" fill="#9A9A9A"/></svg>
<svg class="r" style="left:667px;top:70px" width="32" height="35" viewBox="0 0 32 35"><g transform="translate(5,5)"><rect x="1.5" y="0.75" width="21.75" height="27.5" rx="1.5" fill="#fff" stroke="#7A7A7A" stroke-width="1.5"/><circle cx="1.6" cy="5" r="1.5" fill="#fff" stroke="#888" stroke-width="1"/><circle cx="1.6" cy="10" r="1.5" fill="#fff" stroke="#888" stroke-width="1"/><circle cx="1.6" cy="15" r="1.5" fill="#fff" stroke="#888" stroke-width="1"/><circle cx="1.6" cy="20" r="1.5" fill="#fff" stroke="#888" stroke-width="1"/><circle cx="1.6" cy="25" r="1.5" fill="#fff" stroke="#888" stroke-width="1"/></g><rect x="10.5" y="20" width="1" height="8" fill="#BBB"/><rect x="11.5" y="19.5" width="3.5" height="8" fill="#3A6FB7"/><rect x="16" y="16" width="3.5" height="11.5" fill="#EBB660"/><rect x="20.5" y="19" width="3.5" height="8.5" fill="#3A6FB7"/><rect x="9.5" y="27.5" width="16" height="0.8" fill="#AAA"/><rect x="15" y="10" width="9" height="1" fill="#C9A87C"/><rect x="15" y="12.5" width="9" height="1" fill="#C9A87C"/><circle cx="7" cy="8" r="4.8" fill="#F0D698" opacity="0.85"/><rect x="6.4" y="0.5" width="1.2" height="15" fill="#F0D698" opacity="0.7" transform="rotate(0 7 8)"/><rect x="6.4" y="0.5" width="1.2" height="15" fill="#F0D698" opacity="0.7" transform="rotate(45 7 8)"/><rect x="6.4" y="0.5" width="1.2" height="15" fill="#F0D698" opacity="0.7" transform="rotate(90 7 8)"/><rect x="6.4" y="0.5" width="1.2" height="15" fill="#F0D698" opacity="0.7" transform="rotate(135 7 8)"/></svg>
<svg class="r" style="left:717px;top:75px" width="24" height="29" viewBox="0 0 24 29"><rect x="1.5" y="0.75" width="21.75" height="27.5" rx="1.5" fill="#fff" stroke="#7A7A7A" stroke-width="1.5"/><circle cx="1.6" cy="5" r="1.5" fill="#fff" stroke="#888" stroke-width="1"/><circle cx="1.6" cy="10" r="1.5" fill="#fff" stroke="#888" stroke-width="1"/><circle cx="1.6" cy="15" r="1.5" fill="#fff" stroke="#888" stroke-width="1"/><circle cx="1.6" cy="20" r="1.5" fill="#fff" stroke="#888" stroke-width="1"/><circle cx="1.6" cy="25" r="1.5" fill="#fff" stroke="#888" stroke-width="1"/></svg>
<svg class="r" style="left:754px;top:80px" width="17" height="17" viewBox="0 0 17 17"><rect x="1.5" y="0.75" width="12" height="14.5" rx="1" fill="#fff" stroke="#888" stroke-width="1.2"/><circle cx="1.5" cy="3" r="0.9" fill="#888"/><circle cx="1.5" cy="6" r="0.9" fill="#888"/><circle cx="1.5" cy="9" r="0.9" fill="#888"/><circle cx="1.5" cy="12" r="0.9" fill="#888"/><rect x="4" y="3" width="7" height="2.5" fill="#5C9E80"/><path d="M7 8 L15.5 16" stroke="#444" stroke-width="2.1" stroke-linecap="round"/><circle cx="4.5" cy="13.5" r="1.5" fill="#E9A265"/><circle cx="7.5" cy="15" r="1.2" fill="#E9A265"/></svg>
<svg class="r" style="left:753px;top:113px" width="17" height="17" viewBox="0 0 17 17"><rect x="0.75" y="0.75" width="15.5" height="15.5" fill="#fff" stroke="#777" stroke-width="1.4"/><rect x="3" y="3" width="11" height="5" fill="#fff" stroke="#888" stroke-width="1"/><rect x="3" y="9.5" width="11" height="5" fill="#fff" stroke="#888" stroke-width="1"/><rect x="5" y="5" width="7" height="1" fill="#BBB"/><rect x="5" y="11.5" width="7" height="1" fill="#BBB"/></svg>
<svg class="r" style="left:880px;top:74px" width="31" height="30" viewBox="0 0 31 30"><path d="M5 2 H27 Q29.5 2 29.5 4.5 V8 H25 V24 Q25 28.5 21 28.5 H5 Q1.5 28.5 1.5 25.5 V22.5 H5 Z" fill="#fff" stroke="#777" stroke-width="1.5"/><path d="M24 1.5 H27.5 Q30 1.5 30 4 V8.5 H24 Z" fill="#6E6E6E"/><path d="M1 22 H21 V25.5 Q21 29 24 29 H5 Q1 29 1 26 Z" fill="#6E6E6E"/></svg>
<svg class="r" style="left:919px;top:73px" width="19" height="17" viewBox="0 0 19 17"><g opacity="0.75"><path d="M4 8 L9.5 9 L15 4 M9.5 9 L15 14 M9.5 9 L4 14" stroke="#9BB" stroke-width="1.2" fill="none"/><circle cx="4" cy="8" r="2.5" fill="none" stroke="#E4A0A0" stroke-width="1.6"/><circle cx="15" cy="4" r="2.5" fill="none" stroke="#E4909A" stroke-width="1.6"/><circle cx="9.5" cy="2.5" r="1.8" fill="none" stroke="#E8B49A" stroke-width="1.3"/><circle cx="9.5" cy="10" r="2.5" fill="none" stroke="#6DBBA5" stroke-width="1.6"/><circle cx="15" cy="14" r="2.5" fill="none" stroke="#88A8C8" stroke-width="1.6"/></g></svg>
<svg class="r" style="left:919px;top:96px" width="19" height="17" viewBox="0 0 19 17"><path d="M2 6 V2 H4 M17 6 V2 H15 M5 13.5 H12" stroke="#555" stroke-width="1.1" fill="none"/><circle cx="9.5" cy="4" r="3.2" fill="#D86A50"/><circle cx="8.38" cy="2.88" r="1.12" fill="#fff" opacity="0.5"/><circle cx="4.5" cy="13" r="3.2" fill="#4A7EC0"/><circle cx="3.38" cy="11.88" r="1.12" fill="#fff" opacity="0.5"/><circle cx="14.5" cy="13" r="3.2" fill="#EEC078"/><circle cx="13.38" cy="11.88" r="1.12" fill="#fff" opacity="0.5"/></svg>
<svg class="r" style="left:919px;top:119px" width="19" height="17" viewBox="0 0 19 17"><rect x="2.5" y="6" width="15" height="10" fill="#fff" stroke="#777" stroke-width="1.2"/><rect x="4.5" y="11" width="4" height="0.9" fill="#999"/><rect x="10" y="11" width="5" height="0.9" fill="#999"/><rect x="4.5" y="13.5" width="4" height="0.9" fill="#999"/><rect x="10" y="13.5" width="5" height="0.9" fill="#999"/><circle cx="4.5" cy="5" r="3.3" fill="#F0C478"/><circle cx="3.35" cy="3.85" r="1.15" fill="#fff" opacity="0.5"/><circle cx="12" cy="3.5" r="3.3" fill="#EEA0BE"/><circle cx="10.85" cy="2.35" r="1.15" fill="#fff" opacity="0.5"/></svg>
<svg class="r" style="left:22px;top:10px" width="16" height="16" viewBox="0 0 16 16"><rect x="1" y="1" width="14" height="14" fill="none" stroke="#fff" stroke-width="2"/><rect x="4" y="1" width="8" height="6" fill="none" stroke="#fff" stroke-width="1.6"/><rect x="4.5" y="10" width="7" height="5" fill="#fff"/><rect x="6.5" y="11.5" width="3" height="3.5" fill="#A4373A"/></svg>
<svg class="r" style="left:52px;top:10px" width="16" height="15" viewBox="0 0 16 15"><path d="M3 5 H10 Q14.5 5 14.5 9.5 Q14.5 14 10 14 H8" fill="none" stroke="#C47075" stroke-width="1.6"/><path d="M6 1.5 L2 5 L6 8.5" fill="none" stroke="#C47075" stroke-width="1.6"/></svg>
<svg class="r" style="left:92px;top:10px" width="16" height="15" viewBox="0 0 16 15"><path d="M13 5 H6 Q1.5 5 1.5 9.5 Q1.5 14 6 14 H8" fill="none" stroke="#C47075" stroke-width="1.6"/><path d="M10 1.5 L14 5 L10 8.5" fill="none" stroke="#C47075" stroke-width="1.6"/></svg>
<svg class="r" style="left:75px;top:14px" width="6" height="4" viewBox="0 0 6 4"><path d="M0.5 0.5 H5.5 L3 3.5 Z" fill="#C47075"/></svg>
<svg class="r" style="left:115px;top:14px" width="6" height="4" viewBox="0 0 6 4"><path d="M0.5 0.5 H5.5 L3 3.5 Z" fill="#C47075"/></svg>
<svg class="r" style="left:137px;top:14px" width="7" height="7" viewBox="0 0 7 7"><rect x="0.5" y="0" width="6" height="1.3" fill="#fff"/><path d="M0.5 3 H6.5 L3.5 6.5 Z" fill="#fff"/></svg>
<svg class="r" style="left:760px;top:41px" width="16" height="19" viewBox="0 0 16 19"><path d="M5 12.5 Q2 10 2 6.5 A6 6 0 0 1 14 6.5 Q14 10 11 12.5 V14.5 H5 Z" fill="none" stroke="#F6DCDC" stroke-width="1.3"/><rect x="5.5" y="15.8" width="5" height="1.2" fill="#F6DCDC"/><rect x="6.5" y="17.8" width="3" height="1" fill="#F6DCDC"/></svg>
<svg class="r" style="left:181px;top:172px" width="14" height="14" viewBox="0 0 14 14"><circle cx="7" cy="7" r="6.2" fill="#fff" stroke="#555" stroke-width="1.3"/><path d="M3.8 5.8 H10.2 L7 9.3 Z" fill="#444"/></svg>
<svg class="r" style="left:203px;top:176px" width="10" height="8" viewBox="0 0 10 8"><path d="M4.5 0.8 L1.2 4 L4.5 7.2 M8.8 0.8 L5.5 4 L8.8 7.2" fill="none" stroke="#444" stroke-width="1.3"/></svg>
<svg class="r" style="left:199px;top:201px" width="14" height="13" viewBox="0 0 14 13"><circle cx="8.6" cy="5" r="3.9" fill="#F3F8FC" stroke="#3C6AA8" stroke-width="1.7"/><path d="M5.8 7.8 L1.2 12.2" stroke="#3C6AA8" stroke-width="2.3" stroke-linecap="round"/></svg>
<svg class="r" style="left:196px;top:225px" width="9" height="9" viewBox="0 0 9 9"><path d="M1 4.5 L4.5 1 L8 4.5 M1 8.5 L4.5 5 L8 8.5" fill="none" stroke="#444" stroke-width="1.4"/></svg>
<svg class="r" style="left:196px;top:318px" width="9" height="9" viewBox="0 0 9 9"><path d="M1 4.5 L4.5 1 L8 4.5 M1 8.5 L4.5 5 L8 8.5" fill="none" stroke="#444" stroke-width="1.4"/></svg>
<svg class="r" style="left:196px;top:361px" width="9" height="9" viewBox="0 0 9 9"><path d="M1 4.5 L4.5 1 L8 4.5 M1 8.5 L4.5 5 L8 8.5" fill="none" stroke="#444" stroke-width="1.4"/></svg>
<svg class="r" style="left:196px;top:405px" width="9" height="9" viewBox="0 0 9 9"><path d="M1 4.5 L4.5 1 L8 4.5 M1 8.5 L4.5 5 L8 8.5" fill="none" stroke="#444" stroke-width="1.4"/></svg>
<svg class="r" style="left:15.5px;top:242.4px" width="17" height="14" viewBox="0 0 17 14"><rect x="0" y="0" width="16.5" height="14" fill="#6A76A6"/><rect x="0.8" y="0.6" width="14.9" height="2.6" fill="#8A92CC"/><rect x="1.1" y="3.9" width="4.2" height="2.1" fill="#F0F4FC"/><rect x="1.1" y="6.8" width="4.2" height="2.1" fill="#F0F4FC"/><rect x="1.1" y="9.7" width="4.2" height="2.1" fill="#F0F4FC"/><rect x="6.1" y="3.9" width="4.2" height="2.1" fill="#F0F4FC"/><rect x="6.1" y="6.8" width="4.2" height="2.1" fill="#F0F4FC"/><rect x="6.1" y="9.7" width="4.2" height="2.1" fill="#F0F4FC"/><rect x="11.1" y="3.9" width="4.2" height="2.1" fill="#F0F4FC"/><rect x="11.1" y="6.8" width="4.2" height="2.1" fill="#F0F4FC"/><rect x="11.1" y="9.7" width="4.2" height="2.1" fill="#F0F4FC"/><rect x="0" y="12.6" width="16.5" height="1.4" fill="#4C5680"/></svg>
<svg class="r" style="left:15.5px;top:267px" width="17" height="14" viewBox="0 0 17 14"><rect x="0" y="0" width="16.5" height="14" fill="#6A76A6"/><rect x="0.8" y="0.6" width="14.9" height="2.6" fill="#8A92CC"/><rect x="1.1" y="3.9" width="4.2" height="2.1" fill="#F0F4FC"/><rect x="1.1" y="6.8" width="4.2" height="2.1" fill="#F0F4FC"/><rect x="1.1" y="9.7" width="4.2" height="2.1" fill="#F0F4FC"/><rect x="6.1" y="3.9" width="4.2" height="2.1" fill="#F0F4FC"/><rect x="6.1" y="6.8" width="4.2" height="2.1" fill="#F0F4FC"/><rect x="6.1" y="9.7" width="4.2" height="2.1" fill="#F0F4FC"/><rect x="11.1" y="3.9" width="4.2" height="2.1" fill="#F0F4FC"/><rect x="11.1" y="6.8" width="4.2" height="2.1" fill="#F0F4FC"/><rect x="11.1" y="9.7" width="4.2" height="2.1" fill="#F0F4FC"/><rect x="0" y="12.6" width="16.5" height="1.4" fill="#4C5680"/></svg>
<svg class="r" style="left:15.5px;top:291.7px" width="17" height="14" viewBox="0 0 17 14"><rect x="0" y="0" width="16.5" height="14" fill="#6A76A6"/><rect x="0.8" y="0.6" width="14.9" height="2.6" fill="#8A92CC"/><rect x="1.1" y="3.9" width="4.2" height="2.1" fill="#F0F4FC"/><rect x="1.1" y="6.8" width="4.2" height="2.1" fill="#F0F4FC"/><rect x="1.1" y="9.7" width="4.2" height="2.1" fill="#F0F4FC"/><rect x="6.1" y="3.9" width="4.2" height="2.1" fill="#F0F4FC"/><rect x="6.1" y="6.8" width="4.2" height="2.1" fill="#F0F4FC"/><rect x="6.1" y="9.7" width="4.2" height="2.1" fill="#F0F4FC"/><rect x="11.1" y="3.9" width="4.2" height="2.1" fill="#F0F4FC"/><rect x="11.1" y="6.8" width="4.2" height="2.1" fill="#F0F4FC"/><rect x="11.1" y="9.7" width="4.2" height="2.1" fill="#F0F4FC"/><rect x="0" y="12.6" width="16.5" height="1.4" fill="#4C5680"/></svg>
<svg class="r" style="left:15px;top:335px" width="18" height="17" viewBox="0 0 18 17"><rect x="5.5" y="0.5" width="12" height="10" fill="#E6F0F0" stroke="#5B8E96" stroke-width="1"/><rect x="5" y="0" width="13" height="2.5" fill="#5B8E96"/><rect x="0.5" y="5.5" width="12" height="10.5" fill="#fff" stroke="#5870A8" stroke-width="1"/><rect x="0" y="5" width="13" height="2.5" fill="#6C7EB8"/><rect x="2" y="9" width="4" height="1.5" fill="#7C8CC0"/><rect x="7" y="9" width="4" height="1.5" fill="#7C8CC0"/><rect x="2" y="12" width="4" height="1.5" fill="#7C8CC0"/><rect x="7" y="12" width="4" height="1.5" fill="#7C8CC0"/></svg>
<svg class="r" style="left:15px;top:378px" width="16" height="16" viewBox="0 0 16 16"><rect x="0.5" y="0.5" width="15" height="15" fill="#F4F0F6" stroke="#8A7A9A" stroke-width="1"/><rect x="0" y="0" width="16" height="3" fill="#C04880"/><rect x="2" y="7" width="3" height="1.2" fill="#6C7EB8"/><rect x="7" y="6" width="6.5" height="3" fill="#fff" stroke="#6C7EB8" stroke-width="1"/><rect x="2" y="11" width="3" height="1.2" fill="#6C7EB8"/><rect x="7" y="10" width="6.5" height="3" fill="#fff" stroke="#6C7EB8" stroke-width="1"/></svg>
<svg class="r" style="left:15px;top:421px" width="15" height="15" viewBox="0 0 15 15"><defs><linearGradient id="gg" x1="0" y1="0" x2="1" y2="1"><stop offset="0" stop-color="#6DB870"/><stop offset="1" stop-color="#2E7A3A"/></linearGradient></defs><rect x="0.5" y="0.5" width="14" height="14" fill="url(#gg)" stroke="#2F6B35" stroke-width="1"/><rect x="4" y="3" width="4" height="1" fill="#C8EAC8"/><rect x="4" y="5" width="3" height="1" fill="#C8EAC8"/></svg>
<svg class="r" style="left:15px;top:447px" width="15" height="15" viewBox="0 0 15 15"><defs><linearGradient id="gg" x1="0" y1="0" x2="1" y2="1"><stop offset="0" stop-color="#6DB870"/><stop offset="1" stop-color="#2E7A3A"/></linearGradient></defs><rect x="0.5" y="0.5" width="14" height="14" fill="url(#gg)" stroke="#2F6B35" stroke-width="1"/><rect x="4" y="3" width="4" height="1" fill="#C8EAC8"/><rect x="4" y="5" width="3" height="1" fill="#C8EAC8"/></svg>
<svg class="r" style="left:222px;top:160px" width="978" height="30" viewBox="222 160 978 30"><path d="M800,186.6 V165.7 Q800,163.2 802.5,163.2 H920 C927,163.2 929,186.6 937,186.6" fill="#fff" stroke="#A9A9A9" stroke-width="1.3"/><path d="M472,186.6 V165.7 Q472,163.2 474.5,163.2 H567 C574,163.2 574,186.6 582,186.6" fill="#fff" stroke="#A9A9A9" stroke-width="1.3"/><path d="M343.8,186.6 V165.7 Q343.8,163.2 346.3,163.2 H455 C462,163.2 469,186.6 477,186.6" fill="#fff" stroke="#A9A9A9" stroke-width="1.3"/><path d="M222.8,186.6 V165.7 Q222.8,163.2 225.3,163.2 H329 C336,163.2 340.3,186.6 348.3,186.6" fill="#fff" stroke="#A9A9A9" stroke-width="1.3"/><rect x="222" y="186" width="359" height="1.3" fill="#B4B6B9"/><rect x="760" y="186" width="440" height="1.3" fill="#B4B6B9"/><path d="M581.2,187.2 V165.7 Q581.2,163.2 583.7,163.2 H800 V190" fill="#fff" stroke="#A9A9A9" stroke-width="1.3"/></svg>
<svg class="r" style="left:229px;top:167.5px" width="17" height="14" viewBox="0 0 17 14"><rect x="0" y="0" width="17" height="13.5" fill="#6A76A6"/><rect x="0.8" y="0.6" width="15.4" height="2.6" fill="#8A92CC"/><rect x="1.1" y="3.9" width="4.4" height="2.0" fill="#F0F4FC"/><rect x="1.1" y="6.7" width="4.4" height="2.0" fill="#F0F4FC"/><rect x="1.1" y="9.5" width="4.4" height="2.0" fill="#F0F4FC"/><rect x="6.3" y="3.9" width="4.4" height="2.0" fill="#F0F4FC"/><rect x="6.3" y="6.7" width="4.4" height="2.0" fill="#F0F4FC"/><rect x="6.3" y="9.5" width="4.4" height="2.0" fill="#F0F4FC"/><rect x="11.5" y="3.9" width="4.4" height="2.0" fill="#F0F4FC"/><rect x="11.5" y="6.7" width="4.4" height="2.0" fill="#F0F4FC"/><rect x="11.5" y="9.5" width="4.4" height="2.0" fill="#F0F4FC"/><rect x="0" y="12.2" width="17" height="1.3" fill="#4C5680"/></svg>
<svg class="r" style="left:347px;top:167.5px" width="17" height="14" viewBox="0 0 17 14"><rect x="0" y="0" width="17" height="13.5" fill="#6A76A6"/><rect x="0.8" y="0.6" width="15.4" height="2.6" fill="#8A92CC"/><rect x="1.1" y="3.9" width="4.4" height="2.0" fill="#F0F4FC"/><rect x="1.1" y="6.7" width="4.4" height="2.0" fill="#F0F4FC"/><rect x="1.1" y="9.5" width="4.4" height="2.0" fill="#F0F4FC"/><rect x="6.3" y="3.9" width="4.4" height="2.0" fill="#F0F4FC"/><rect x="6.3" y="6.7" width="4.4" height="2.0" fill="#F0F4FC"/><rect x="6.3" y="9.5" width="4.4" height="2.0" fill="#F0F4FC"/><rect x="11.5" y="3.9" width="4.4" height="2.0" fill="#F0F4FC"/><rect x="11.5" y="6.7" width="4.4" height="2.0" fill="#F0F4FC"/><rect x="11.5" y="9.5" width="4.4" height="2.0" fill="#F0F4FC"/><rect x="0" y="12.2" width="17" height="1.3" fill="#4C5680"/></svg>
<svg class="r" style="left:475px;top:167px" width="18" height="15" viewBox="0 0 18 15"><path d="M1 6 H6 L9 3 H12 M6 6 L9 10 H12" fill="none" stroke="#5A70A8" stroke-width="1.2"/><rect x="1" y="4.5" width="5" height="3" fill="#7C8CC0"/><rect x="11" y="1" width="6" height="5" fill="#fff" stroke="#5A70A8" stroke-width="1"/><rect x="11" y="8" width="6" height="6" fill="#fff" stroke="#5A70A8" stroke-width="1"/><rect x="11" y="1" width="6" height="1.5" fill="#7C8CC0"/><rect x="11" y="8" width="6" height="1.5" fill="#7C8CC0"/></svg>
<svg class="r" style="left:587px;top:167.5px" width="15" height="14" viewBox="0 0 15 14"><defs><linearGradient id="g2" x1="0" y1="0" x2="1" y2="1"><stop offset="0" stop-color="#7CC47E"/><stop offset="1" stop-color="#2E7A3A"/></linearGradient></defs><rect x="0.5" y="0.5" width="13.5" height="13" fill="url(#g2)" stroke="#2F5F35" stroke-width="1"/><rect x="0.5" y="0.5" width="2" height="13" fill="#3A5A3A"/><rect x="5" y="3" width="4" height="1" fill="#D0F0D0"/></svg>
<div class="t" style="left:254.70px;top:169.57px;font-size:11.5px;line-height:11.5px;color:#AA4A52;font-weight:normal;font-style:normal;transform:scaleX(1.0022);">Customer Data</div>
<div class="t" style="left:372.80px;top:169.57px;font-size:11.5px;line-height:11.5px;color:#AA4A52;font-weight:normal;font-style:normal;transform:scaleX(1.0070);">Customer Orders</div>
<div class="t" style="left:500.60px;top:169.57px;font-size:11.5px;line-height:11.5px;color:#AA4A52;font-weight:normal;font-style:normal;transform:scaleX(1.0400);">Relationships</div>
<div class="t" style="left:611.80px;top:169.57px;font-size:11.5px;line-height:11.5px;color:#A23A44;font-weight:normal;font-style:normal;transform:scaleX(1.0569);-webkit-text-stroke:0.5px currentColor">Customer Orders</div>
<div class="t" style="left:889.60px;top:169.07px;font-size:11.5px;line-height:11.5px;color:#AA4A52;font-weight:normal;font-style:normal;transform:scaleX(0.9391);">Form1</div>
<div class="r" style="left:663px;top:163px;width:222px;height:149px;background:#fff;border:1px solid #C8C8C8;box-sizing:border-box"></div>
<div class="t" style="left:676.00px;top:172.02px;font-size:12.5px;line-height:12.5px;color:#505050;font-weight:bold;font-style:normal;transform:scaleX(0.9670);-webkit-text-stroke:0;">Report Design</div>
<div class="t" style="left:676.00px;top:193.74px;font-size:12px;line-height:12px;color:#686868;font-weight:normal;font-style:normal;transform:scaleX(1.0082);">Create a new blank report in Design</div>
<div class="t" style="left:676.00px;top:209.24px;font-size:12px;line-height:12px;color:#686868;font-weight:normal;font-style:normal;transform:scaleX(1.0496);">view.</div>
<div class="t" style="left:676.00px;top:240.44px;font-size:12px;line-height:12px;color:#686868;font-weight:normal;font-style:normal;transform:scaleX(1.0142);">In Design view, you can make</div>
<div class="t" style="left:676.00px;top:256.04px;font-size:12px;line-height:12px;color:#686868;font-weight:normal;font-style:normal;transform:scaleX(1.0080);">advanced design changes to</div>
<div class="t" style="left:676.00px;top:271.64px;font-size:12px;line-height:12px;color:#686868;font-weight:normal;font-style:normal;transform:scaleX(1.0196);">reports, such as adding custom</div>
<div class="t" style="left:676.00px;top:287.24px;font-size:12px;line-height:12px;color:#686868;font-weight:normal;font-style:normal;transform:scaleX(1.0489);">control types and writing code.</div>
</body></html>
